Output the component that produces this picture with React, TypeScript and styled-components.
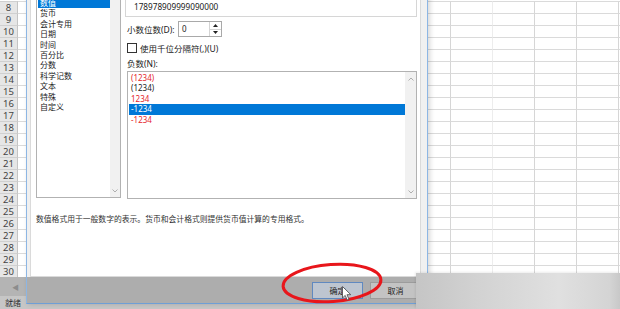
import React from "react";
import styled, { createGlobalStyle } from "styled-components";

const Global = createGlobalStyle`
  html, body { margin: 0; padding: 0; background: #fff; }
  body { font-family: "Noto Sans", "Noto Sans CJK SC", sans-serif; }
`;

const FONT = `"Noto Sans", "Noto Sans CJK SC", sans-serif`;

const Screen = styled.div`
  position: relative;
  width: 620px;
  height: 309px;
  overflow: hidden;
  display: flex;
  flex-direction: column;
  background: #fff;
  font-family: ${FONT};
`;

const Sheet = styled.div`
  padding-top: 1px;
  display: flex;
  flex-direction: column;
  background: #fff;
`;

const SheetRow = styled.div`
  display: flex;
  height: 12px;
`;

const RowHeader = styled.div`
  width: 18px;
  flex: none;
  box-sizing: border-box;
  border-top: 1px solid #d0d0d0;
  border-right: 1px solid #c4c4c4;
  background: #e6e6e6;
  font-size: 9.5px;
  line-height: 11px;
  text-align: center;
  color: #444;
`;

const Cell = styled.div<{ $w: number; $faint?: boolean }>`
  width: ${(p) => p.$w}px;
  flex: none;
  box-sizing: border-box;
  border-top: 1px solid #dadada;
  border-right: 1px solid ${(p) => (p.$faint ? "#ededed" : "#d6d6d6")};
`;

const TabBar = styled.div`
  height: 19px;
  background: #b4b4b4;
  display: flex;
  align-items: center;
  padding-left: 12px;
  font-size: 7px;
  color: #8c8c8c;
`;

const StatusBar = styled.div`
  height: 13px;
  background: #c6c6c6;
  display: flex;
  align-items: center;
  padding-left: 5px;
  font-size: 8px;
  color: #333;
`;

const Dialog = styled.div`
  position: absolute;
  left: 26px;
  top: -10px;
  width: 402px;
  height: 314px;
  box-sizing: border-box;
  border: 1px solid #8db6e4;
  border-top: none;
  border-bottom-color: #6f9fd6;
  background: #f0f0f0;
  display: flex;
  flex-direction: column;
  box-shadow: 2px 0 5px rgba(0, 0, 0, 0.16);
`;

const Panel = styled.div`
  flex: 1;
  margin: 0 6px 0 3px;
  box-sizing: border-box;
  background: #fff;
  border: 1px solid #dadada;
  border-top: none;
  padding: 7px 3px 0 5px;
  display: flex;
  flex-direction: column;
`;

const Columns = styled.div`
  display: grid;
  grid-template-columns: 85px 1fr;
  column-gap: 4px;
  align-items: start;
`;

const ListBox = styled.div<{ $h: number }>`
  height: ${(p) => p.$h}px;
  box-sizing: border-box;
  border: 1px solid #b2b2b2;
  display: flex;
  background: #fff;
`;

const Items = styled.div<{ $pt: number }>`
  flex: 1;
  padding: ${(p) => p.$pt}px 0 0 1px;
  display: flex;
  flex-direction: column;
`;

const Item = styled.div<{ $sel?: boolean; $red?: boolean }>`
  height: 10.4px;
  line-height: 10.4px;
  font-size: 8px;
  padding-left: 2px;
  white-space: nowrap;
  background: ${(p) => (p.$sel ? "#0078d7" : "transparent")};
  color: ${(p) => (p.$sel ? "#fff" : p.$red ? "#e5262b" : "#222")};
`;

const ScrollTrack = styled.div<{ $w: number }>`
  width: ${(p) => p.$w}px;
  flex: none;
  background: #f1f1f1;
  display: flex;
  flex-direction: column;
  justify-content: space-between;
  align-items: center;
  padding: 5px 0 4px;
  box-sizing: border-box;
`;

const RightCol = styled.div`
  display: flex;
  flex-direction: column;
`;

const SampleBox = styled.div`
  height: 20px;
  box-sizing: border-box;
  border: 1px solid #d6d6d6;
  padding-left: 8px;
  font-size: 8.2px;
  line-height: 18px;
  color: #222;
`;

const FieldRow = styled.div<{ $mt: number; $h: number; $gap?: number }>`
  margin-top: ${(p) => p.$mt}px;
  height: ${(p) => p.$h}px;
  padding-left: 2px;
  display: flex;
  align-items: center;
  gap: ${(p) => p.$gap ?? 0}px;
  font-size: 8.5px;
  color: #222;
  white-space: nowrap;
`;

const FieldLabel = styled.span<{ $w?: number }>`
  width: ${(p) => (p.$w ? `${p.$w}px` : "auto")};
  flex: none;
`;

const Spinner = styled.div`
  width: 44px;
  height: 16px;
  box-sizing: border-box;
  border: 1px solid #a9a9a9;
  display: flex;
  background: #fff;
`;

const SpinValue = styled.div`
  flex: 1;
  padding-left: 3px;
  font-size: 8px;
  line-height: 14px;
`;

const SpinButtons = styled.div`
  width: 11px;
  border-left: 1px solid #d4d4d4;
  display: flex;
  flex-direction: column;
`;

const SpinHalf = styled.div<{ $top?: boolean }>`
  flex: 1;
  display: flex;
  align-items: center;
  justify-content: center;
  border-bottom: ${(p) => (p.$top ? "1px solid #d4d4d4" : "none")};
`;

const CheckBox = styled.div`
  width: 10px;
  height: 10px;
  box-sizing: border-box;
  border: 1px solid #333;
  background: #fff;
`;

const NegList = styled(ListBox)`
  margin: 3px 0 0 2px;
`;

const Description = styled.div`
  margin-top: 15px;
  font-size: 7.8px;
  line-height: 11px;
  color: #333;
  white-space: nowrap;
`;

const Footer = styled.div`
  height: 26px;
  flex: none;
  background: #adadad;
  display: flex;
  justify-content: flex-end;
  align-items: center;
  gap: 7px;
  padding-right: 6px;
`;

const Button = styled.div<{ $primary?: boolean }>`
  width: 51px;
  height: 17px;
  box-sizing: border-box;
  border: 1px solid ${(p) => (p.$primary ? "#6089c0" : "#9c9c9c")};
  background: ${(p) => (p.$primary ? "#bdc5d0" : "#c3c3c3")};
  font-size: 8px;
  line-height: 15px;
  text-align: center;
  color: #222;
`;

const GrayPopup = styled.div`
  position: absolute;
  left: 416px;
  top: 273px;
  width: 204px;
  height: 36px;
  background: linear-gradient(90deg, #c5c5c5 0%, #d2d2d2 30%, #e0e0e0 70%, #d4d4d4 95%, #c8c8c8 100%);
  box-shadow: -1px -1px 2px rgba(0, 0, 0, 0.08);
`;

const Annotation = styled.svg<{ $x: number; $y: number }>`
  position: absolute;
  left: ${(p) => p.$x}px;
  top: ${(p) => p.$y}px;
  overflow: visible;
`;

const Chevron = ({ up }: { up?: boolean }) => (
  <svg width="6" height="4" viewBox="0 0 6 4">
    <polyline
      points={up ? "0.5,3.5 3,1 5.5,3.5" : "0.5,0.5 3,3 5.5,0.5"}
      fill="none"
      stroke="#a6a6a6"
      strokeWidth="0.9"
    />
  </svg>
);

const Tri = ({ up }: { up?: boolean }) => (
  <svg width="5" height="3" viewBox="0 0 5 3">
    <polygon points={up ? "0,3 2.5,0 5,3" : "0,0 5,0 2.5,3"} fill="#222" />
  </svg>
);

const categories = ["数值", "货币", "会计专用", "日期", "时间", "百分比", "分数", "科学记数", "文本", "特殊", "自定义"];

const negatives: { t: string; red?: boolean; sel?: boolean }[] = [
  { t: "(1234)", red: true },
  { t: "(1234)" },
  { t: "1234", red: true },
  { t: "-1234", sel: true },
  { t: "-1234", red: true },
];

const rows = Array.from({ length: 23 }, (_, i) => i + 8);
const cellWidths = [433, 42, 42, 42, 42, 42];

export default function App() {
  return (
    <>
      <Global />
      <Screen>
        <Sheet>
          {rows.map((r) => (
            <SheetRow key={r}>
              <RowHeader>{r}</RowHeader>
              {cellWidths.map((w, i) => (
                <Cell key={i} $w={w} $faint={i === 1} />
              ))}
            </SheetRow>
          ))}
        </Sheet>
        <TabBar>◀</TabBar>
        <StatusBar>就绪</StatusBar>

        <Dialog>
          <Panel>
            <Columns>
              <ListBox $h={201}>
                <Items $pt={0}>
                  {categories.map((c, i) => (
                    <Item key={c} $sel={i === 0}>
                      {c}
                    </Item>
                  ))}
                </Items>
                <ScrollTrack $w={10}>
                  <span />
                  <Chevron />
                </ScrollTrack>
              </ListBox>
              <RightCol>
                <SampleBox>178978909999090000</SampleBox>
                <FieldRow $mt={4} $h={16}>
                  <FieldLabel $w={51}>小数位数(D):</FieldLabel>
                  <Spinner>
                    <SpinValue>0</SpinValue>
                    <SpinButtons>
                      <SpinHalf $top>
                        <Tri up />
                      </SpinHalf>
                      <SpinHalf>
                        <Tri />
                      </SpinHalf>
                    </SpinButtons>
                  </Spinner>
                </FieldRow>
                <FieldRow $mt={6} $h={10} $gap={3}>
                  <CheckBox />
                  <FieldLabel>使用千位分隔符(,)(U)</FieldLabel>
                </FieldRow>
                <FieldRow $mt={5} $h={10}>
                  <FieldLabel>负数(N):</FieldLabel>
                </FieldRow>
                <NegList $h={128}>
                  <Items $pt={1}>
                    {negatives.map((n, i) => (
                      <Item key={i} $red={n.red} $sel={n.sel}>
                        {n.t}
                      </Item>
                    ))}
                  </Items>
                  <ScrollTrack $w={11}>
                    <Chevron up />
                    <Chevron />
                  </ScrollTrack>
                </NegList>
              </RightCol>
            </Columns>
            <Description>数值格式用于一般数字的表示。货币和会计格式则提供货币值计算的专用格式。</Description>
          </Panel>
          <Footer>
            <Button $primary>确定</Button>
            <Button>取消</Button>
          </Footer>
        </Dialog>

        <GrayPopup />

        <Annotation $x={279} $y={260} width="106" height="46" viewBox="0 0 106 46">
          <ellipse
            cx="53"
            cy="23"
            rx="49"
            ry="18.5"
            fill="none"
            stroke="#e8161b"
            strokeWidth="3"
            transform="rotate(-4 53 23)"
          />
        </Annotation>

        <Annotation $x={342} $y={286} width="10" height="16" viewBox="0 0 10 16">
          <path
            d="M0.5 0.5 L0.5 12 L3.2 9.4 L5.2 14 L7 13.2 L5 8.7 L8.8 8.7 Z"
            fill="#fff"
            stroke="#555"
            strokeWidth="0.9"
            strokeLinejoin="round"
          />
        </Annotation>
      </Screen>
    </>
  );
}
